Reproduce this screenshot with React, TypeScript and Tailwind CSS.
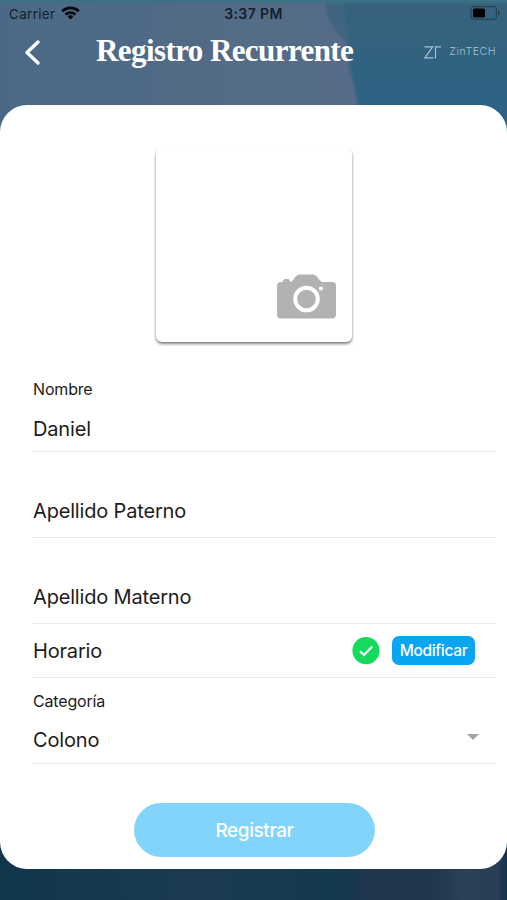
import { ReactNode } from 'react';

function Backdrop() {
  return (
    <svg className="absolute inset-0 h-full w-full" viewBox="0 0 507 900" aria-hidden="true">
      <defs>
        <linearGradient id="sky" x1="0" y1="0" x2="0" y2="1">
          <stop offset="0" stopColor="#37627d" />
          <stop offset="0.12" stopColor="#2d6284" />
          <stop offset="1" stopColor="#10384f" />
        </linearGradient>
        <linearGradient id="shape" x1="0" y1="0" x2="1" y2="0">
          <stop offset="0" stopColor="#4a6986" />
          <stop offset="0.5" stopColor="#516b86" />
          <stop offset="1" stopColor="#566c88" />
        </linearGradient>
        <linearGradient id="ground" x1="0" y1="0" x2="1" y2="0">
          <stop offset="0" stopColor="#10364c" />
          <stop offset="0.4" stopColor="#1b3b50" />
          <stop offset="0.67" stopColor="#12384d" />
          <stop offset="0.74" stopColor="#22364e" />
          <stop offset="0.86" stopColor="#22364e" />
          <stop offset="0.91" stopColor="#2a4057" />
          <stop offset="0.98" stopColor="#2a3e56" />
          <stop offset="1" stopColor="#152f48" />
        </linearGradient>
        <filter id="soft">
          <feGaussianBlur stdDeviation="1.6" />
        </filter>
      </defs>
      <rect width="507" height="900" fill="url(#sky)" />
      <path
        d="M-10 -10H325C326 14 330 24 342 34C350 44 347 54 350 70C352 84 360 92 360 150H-10Z"
        fill="url(#shape)"
        filter="url(#soft)"
      />
      <path d="M325 -10H345C343 12 346 28 350 44C338 36 327 24 325 -10Z" fill="#416580" filter="url(#soft)" />
      <rect x="-5" y="-5" width="517" height="8" fill="#3a7285" filter="url(#soft)" />
      <rect y="820" width="507" height="85" fill="url(#ground)" />
    </svg>
  );
}

function StatusBar() {
  return (
    <div className="grid h-7 grid-cols-3 items-center pl-[9px] pr-[6px] text-[13.5px] text-[#14212c]">
      <div className="flex items-center gap-[6px]">
        <span className="tracking-[0.3px]">Carrier</span>
        <svg className="-mt-[2px]" width="19" height="14" viewBox="0 0 19 14" fill="none" stroke="#05080b" strokeWidth="2.7">
          <path d="M1.2 5.2C5.8 0.8 13.2 0.8 17.8 5.2" />
          <path d="M4.5 8.6C7.3 6 11.7 6 14.5 8.6" />
          <path d="M9.5 13.4L6.6 10.4C8.2 9 10.8 9 12.4 10.4Z" fill="#05080b" stroke="none" />
        </svg>
      </div>
      <span className="-ml-[3px] -mt-[2px] text-center text-[14px] font-semibold tracking-[0.4px]">3:37 PM</span>
      <svg className="-mt-[2px] justify-self-end" width="31" height="14" viewBox="0 0 31 14">
        <rect x="1" y="0.7" width="25.5" height="12.6" rx="3.4" fill="none" stroke="#234459" strokeWidth="1.2" />
        <rect x="3" y="2.5" width="12" height="9" rx="1.6" fill="#000" />
        <path d="M28 4.6C30.6 5.4 30.6 8.6 28 9.4Z" fill="#234459" />
      </svg>
    </div>
  );
}

function Brand() {
  return (
    <div className="flex items-center gap-[8px] text-[#a9c3d2]">
      <svg width="17" height="13" viewBox="0 0 17 13" fill="none" stroke="currentColor" strokeWidth="1.15">
        <path d="M0.5 0.8H8.8L0.9 11.8H9.5" />
        <path d="M11.5 12.4V0.8H17" />
      </svg>
      <span className="text-[10.5px] font-light leading-3 tracking-[0.55px]">ZinTECH</span>
    </div>
  );
}

function Row({ className, children }: { className: string; children: ReactNode }) {
  return <div className={`flex border-b border-[#ebebeb] pl-px ${className}`}>{children}</div>;
}

export default function App() {
  return (
    <div className="relative h-[900px] w-[507px] overflow-hidden font-['Inter','Liberation_Sans',sans-serif]">
      <Backdrop />

      <div className="relative flex h-full flex-col">
        {/* Header */}
        <header className="h-[105px] flex-none">
          <StatusBar />
          <div className="flex h-[48px] items-center pl-[24px] pr-[11px]">
            <svg width="17" height="27" viewBox="0 0 17 27" fill="none" stroke="#fff" strokeWidth="3.4" strokeLinecap="round" strokeLinejoin="round">
              <path d="M14 3L3 13.5L14 24" />
            </svg>
            <h1 className="-mt-[3px] ml-[55px] w-[262px] flex-none whitespace-nowrap font-['Liberation_Serif',serif] text-[31px] font-bold leading-9 tracking-[-0.58px] text-white">
              Registro Recurrente
            </h1>
            <div className="ml-auto">
              <Brand />
            </div>
          </div>
        </header>

        {/* Form */}
        <main className="flex h-[764px] flex-none flex-col rounded-[27px] bg-white pl-8 pr-[11px] text-[20px] tracking-[-0.17px] text-[#1c1c1c]">
          <div className="ml-[124px] mt-[43px] flex h-[194px] w-[196px] flex-none items-end justify-end rounded-[6px] bg-white pb-[23px] pr-[16px] shadow-[0_2px_3px_rgba(0,0,0,0.5)]">
            <svg width="59" height="45" viewBox="0 0 59 45">
              <path
                d="M4 8H5.5C6.3 5.5 7 5 9.5 5C12 5 12.7 5.5 13.5 8C16.5 7.5 18 0.5 23 0.5H36C40.5 0.5 42 8 46 8H55Q59 8 59 12V40.5Q59 44.5 55 44.5H4Q0 44.5 0 40.5V12Q0 8 4 8Z"
                fill="#b2b2b2"
              />
              <circle cx="29.5" cy="25" r="11.3" fill="none" stroke="#fff" strokeWidth="4" />
              <circle cx="44" cy="14.5" r="2.1" fill="#fff" />
            </svg>
          </div>

          <div className="mt-[24px] flex flex-col">
            <Row className="h-[86px] flex-col">
              <span className="mt-[13px] text-[16px] leading-5">Nombre</span>
              <span className="mt-[18px] leading-6">Daniel</span>
            </Row>
            <Row className="h-[86px] items-end pb-[14px]">
              <span className="leading-6">Apellido Paterno</span>
            </Row>
            <Row className="h-[86px] items-end pb-[14px]">
              <span className="leading-6">Apellido Materno</span>
            </Row>
            <Row className="h-[54px] items-center pr-[21px]">
              <span className="leading-6">Horario</span>
              <svg className="ml-auto" width="28" height="28" viewBox="0 0 28 28">
                <circle cx="14" cy="13.6" r="13.6" fill="#14db5c" />
                <path d="M8 14.2L12 18L20.3 9.4" fill="none" stroke="#fff" strokeWidth="2.1" />
              </svg>
              <button className="ml-3 h-[29px] w-[83px] rounded-[7px] bg-[#08a5f1] text-[15.5px] font-medium tracking-[-0.35px] text-white">
                Modificar
              </button>
            </Row>
            <Row className="h-[86px] items-center pr-[17px]">
              <div className="flex h-full flex-col">
                <span className="mt-[13px] text-[16px] leading-5">Categoría</span>
                <span className="mt-[17px] leading-6">Colono</span>
              </div>
              <svg className="ml-auto mt-[33px]" width="12" height="6" viewBox="0 0 12 6">
                <path d="M0 0H12L6 6Z" fill="#a3a3a3" />
              </svg>
            </Row>
          </div>

          <button className="ml-[102px] mt-[39px] h-[54px] w-[241px] flex-none rounded-full bg-[#83d4fa] pt-[2px] text-[19px] font-medium tracking-[-0.42px] text-white">
            Registrar
          </button>
        </main>
      </div>
    </div>
  );
}
